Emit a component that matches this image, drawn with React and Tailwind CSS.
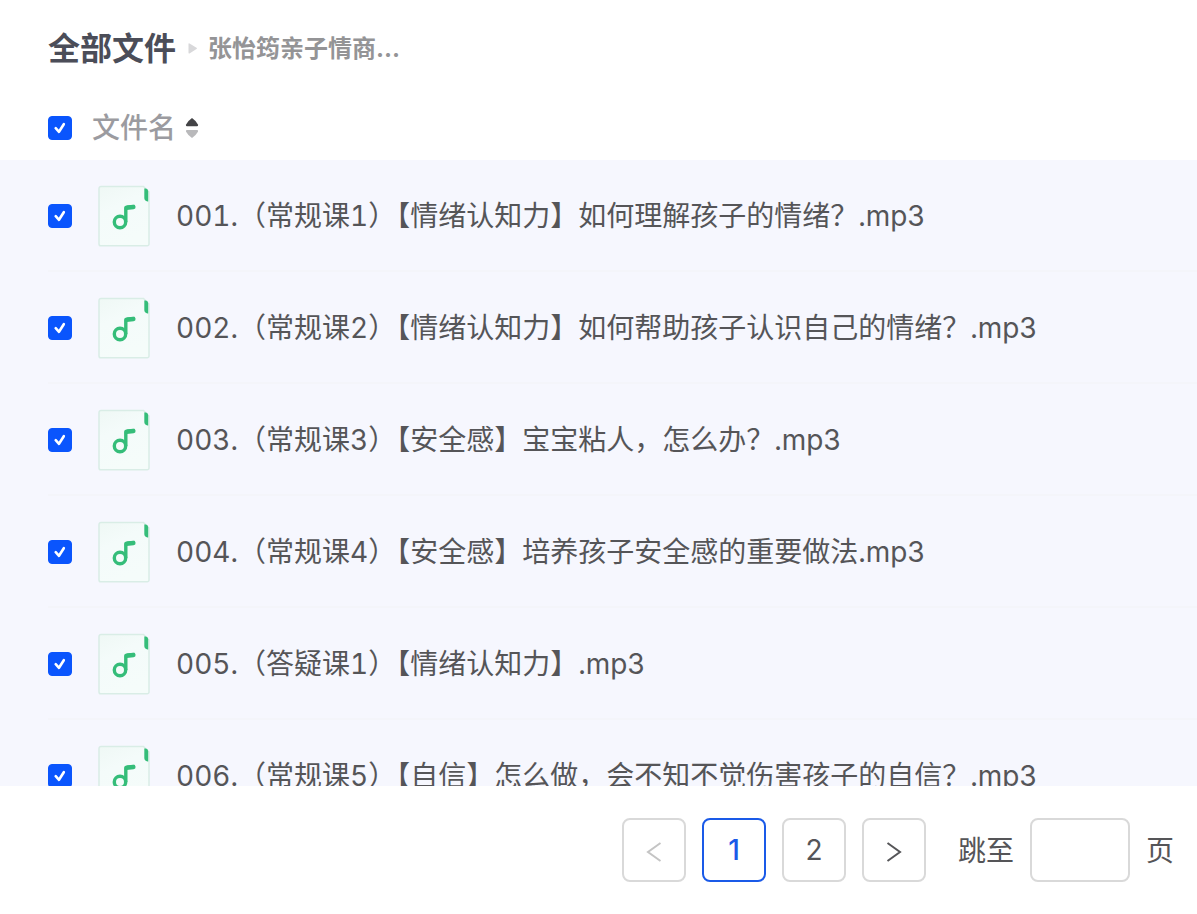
import { useState } from 'react';

const FILES = [
  '001.（常规课1）【情绪认知力】如何理解孩子的情绪？.mp3',
  '002.（常规课2）【情绪认知力】如何帮助孩子认识自己的情绪？.mp3',
  '003.（常规课3）【安全感】宝宝粘人，怎么办？.mp3',
  '004.（常规课4）【安全感】培养孩子安全感的重要做法.mp3',
  '005.（答疑课1）【情绪认知力】.mp3',
  '006.（常规课5）【自信】怎么做，会不知不觉伤害孩子的自信？.mp3',
];

function Checkbox({ label, checked, onChange }) {
  return (
    <span className="relative block size-6 shrink-0">
      <input
        type="checkbox"
        aria-label={label}
        checked={checked}
        onChange={onChange}
        className="peer block size-6 appearance-none rounded border border-[#d9d9d9] bg-white checked:border-[#0a55fd] checked:bg-[#0a55fd]"
      />
      <svg viewBox="0 0 24 24" className="pointer-events-none absolute inset-0 hidden size-6 peer-checked:block" fill="none" stroke="#fff" strokeWidth="2.6" strokeLinecap="round" strokeLinejoin="round">
        <path d="M7.7 12.2 11 15.8 15.8 8.2" />
      </svg>
    </span>
  );
}

function AudioIcon() {
  return (
    <svg viewBox="0 0 52 62" className="h-[62px] w-[52px] shrink-0" fill="none" aria-hidden="true">
      <defs>
        <linearGradient id="sheet" x1="0" y1="0" x2="0.4" y2="1">
          <stop offset="0" stopColor="#eff8f5" />
          <stop offset="0.4" stopColor="#f4fbfa" />
          <stop offset="1" stopColor="#f5fcfa" />
        </linearGradient>
      </defs>
      <path d="M3 1.5H45.5L51 7V59a1.8 1.8 0 0 1-1.8 1.8H2.8A1.8 1.8 0 0 1 1 59V3.500A2 2 0 0 1 3 1.500Z" fill="url(#sheet)" stroke="#d9ede6" strokeWidth="1.5" />
      <path d="M46.3 3.400H48q2.200 .6 2.200 3.200V16.400H49.500q-3.200-.4-3.200-3.400Z" fill="#35bd79" />
      <circle cx="22" cy="37" r="5.700" stroke="#35bd79" strokeWidth="3.400" />
      <path d="M27.800 37V24.200q0-1.600 1.600-1.900L36.800 21.400" stroke="#35bd79" strokeWidth="3.400" />
      <path d="M28.500 22.800 35.300 22" stroke="#35bd79" strokeWidth="4.600" strokeLinecap="round" />
    </svg>
  );
}

export default function App() {
  const [selected, setSelected] = useState(FILES);
  const [page, setPage] = useState(1);
  const [desc, setDesc] = useState(false);

  const allChecked = selected.length === FILES.length;
  const rows = desc ? [...FILES].reverse() : FILES;

  const toggle = (name) => {
    setSelected(selected.includes(name) ? selected.filter(n => n !== name) : [...selected, name]);
  };

  return (
    <div className="flex h-screen flex-col bg-white font-[Inter,'Noto_Sans_CJK_SC',sans-serif] text-[28px] text-[#555558]">
      <nav aria-label="路径" className="flex h-24 shrink-0 items-center px-12 pt-0.5 font-bold whitespace-nowrap">
        <a href="#all" className="text-[32px] text-[#4b4d58]">全部文件</a>
        <svg viewBox="0 0 32 16" className="h-4 w-8" aria-hidden="true">
          <path d="M12.500 3v8.800q0 1.200 1 .6l7-4.300q1-.7 0-1.400l-7-4.300q-1-.6-1 .6Z" fill="#d8d8da" />
        </svg>
        <a href="#folder" className="text-2xl text-[#949496]">张怡筠亲子情商...</a>
      </nav>

      <main className="min-h-0 flex-1 overflow-hidden">
        <table className="w-full border-collapse text-left">
          <thead>
            <tr className="h-16">
              <th className="w-[98px] pl-12">
                <Checkbox label="全选" checked={allChecked} onChange={() => setSelected(allChecked ? [] : FILES)} />
              </th>
              <th className="font-medium text-[#9b9ba0]">
                <button type="button" onClick={() => setDesc(!desc)} className="-ml-1.5 flex items-center gap-2">
                  文件名
                  <svg viewBox="0 0 16 22" className="h-[22px] w-4" aria-hidden="true">
                    <path d="M2.800 9.200Q1.400 9 2.100 7.400Q3.600 4.300 8 1.100Q12.400 4.300 13.900 7.400Q14.600 9 13.200 9.200Z" fill={desc ? '#b9b9bb' : '#434346'} />
                    <path d="M2.800 13Q1.400 13.200 2.100 14.800Q3.600 17.900 8 21.100Q12.400 17.900 13.900 14.800Q14.600 13.200 13.200 13Z" fill={desc ? '#434346' : '#b9b9bb'} />
                  </svg>
                </button>
              </th>
            </tr>
          </thead>
          <tbody className="bg-[#f6f7fe]">
            {rows.map(name => (
              <tr key={name}>
                <td className="p-0 pl-12">
                  <div className="flex h-28 items-center border-b-2 border-[#f4f5fa] pt-0.5">
                    <Checkbox label={name} checked={selected.includes(name)} onChange={() => toggle(name)} />
                  </div>
                </td>
                <td className="p-0">
                  <div className="flex h-28 items-center gap-[26px] border-b-2 border-[#f4f5fa] pt-0.5">
                    <AudioIcon />
                    <span className="whitespace-nowrap tabular-nums">{name}</span>
                  </div>
                </td>
              </tr>
            ))}
          </tbody>
        </table>
      </main>

      <footer className="flex h-32 shrink-0 items-center justify-end gap-4 pr-[23px] pl-6">
        <button type="button" aria-label="上一页" disabled={page === 1} onClick={() => setPage(1)} className="flex size-16 items-center justify-center rounded-lg border-2 border-[#d9d9d9] disabled:text-[#c4c4c4]">
          <svg viewBox="0 0 16 20" className="mt-1 h-5 w-4" fill="none" stroke="currentColor" strokeWidth="2" aria-hidden="true">
            <path d="M14.500 1 2 10l12.500 9" />
          </svg>
        </button>
        {[1, 2].map(n => (
          <button
            key={n}
            type="button"
            onClick={() => setPage(n)}
            className={page === n ? 'size-16 rounded-lg border-2 border-[#1a5ae8] font-medium text-[#1a5ae8]' : 'size-16 rounded-lg border-2 border-[#d9d9d9]'}
          >
            {n}
          </button>
        ))}
        <button type="button" aria-label="下一页" disabled={page === 2} onClick={() => setPage(2)} className="flex size-16 items-center justify-center rounded-lg border-2 border-[#d9d9d9] disabled:text-[#c4c4c4]">
          <svg viewBox="0 0 16 20" className="mt-1 h-5 w-4" fill="none" stroke="currentColor" strokeWidth="2" aria-hidden="true">
            <path d="M1.500 1 14 10 1.500 19" />
          </svg>
        </button>
        <label className="ml-4 flex items-center gap-4">
          <span className="pt-0.5">跳至</span>
          <input type="text" aria-label="页码" className="h-16 w-[100px] rounded-lg border-2 border-[#d9d9d9] px-3" />
          <span className="pt-0.5">页</span>
        </label>
      </footer>
    </div>
  );
}
